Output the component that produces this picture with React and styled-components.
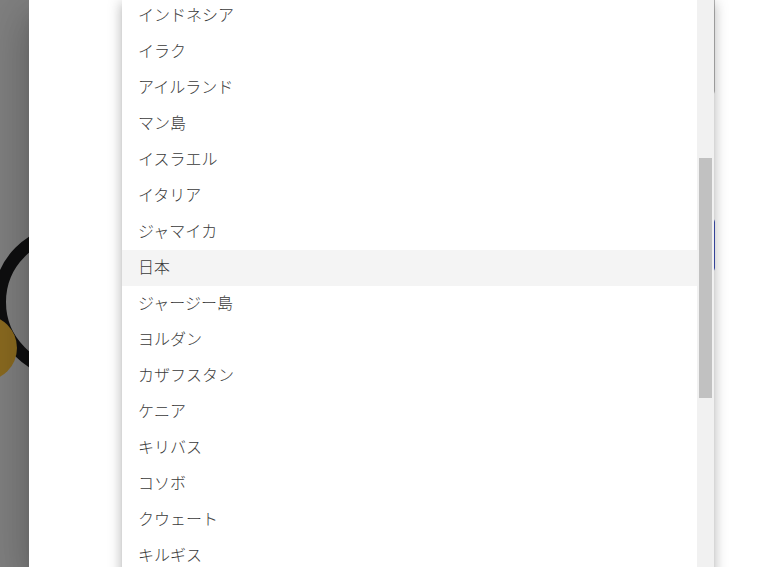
import React from "react";
import styled, { createGlobalStyle } from "styled-components";

const countries = [
  "インドネシア",
  "イラク",
  "アイルランド",
  "マン島",
  "イスラエル",
  "イタリア",
  "ジャマイカ",
  "日本",
  "ジャージー島",
  "ヨルダン",
  "カザフスタン",
  "ケニア",
  "キリバス",
  "コソボ",
  "クウェート",
  "キルギス",
  "ラオス",
  "ラトビア",
];

const GlobalStyle = createGlobalStyle`
  html, body {
    margin: 0;
    padding: 0;
    overflow: hidden;
    background: #ffffff;
  }
  * {
    box-sizing: border-box;
  }
`;

export default function App() {
  return (
    <>
      <GlobalStyle />
      <Screen>
        <Backdrop>
          <svg width="29" height="567" viewBox="0 0 29 567">
            <circle cx="70" cy="302" r="70.5" fill="none" stroke="#0f0f10" strokeWidth="13" />
            <circle cx="-16" cy="348" r="33" fill="#8a6a20" />
          </svg>
        </Backdrop>
        <Modal>
          <Form>
            <Field $top="-40px" $height="135px" />
            <Field $top="123px" $height="54px" $focused />
          </Form>
          <Menu>
            <List>
              {countries.map((name) => (
                <Item key={name} $active={name === "日本"}>
                  {name}
                </Item>
              ))}
            </List>
            <Track>
              <Thumb />
            </Track>
          </Menu>
        </Modal>
      </Screen>
    </>
  );
}

const Screen = styled.div`
  display: flex;
  height: 100vh;
  overflow: hidden;
  font-family: "Noto Sans CJK JP", "Noto Sans", sans-serif;
`;

const Backdrop = styled.div`
  width: 29px;
  flex-shrink: 0;
  background: #808080;
  overflow: hidden;

  svg {
    display: block;
  }
`;

const Modal = styled.div`
  flex: 1;
  position: relative;
  z-index: 1;
  background: #ffffff;
  overflow: hidden;
  box-shadow: 0px 11px 15px -7px rgba(0, 0, 0, 0.2),
    0px 24px 38px 3px rgba(0, 0, 0, 0.14),
    0px 9px 46px 8px rgba(0, 0, 0, 0.12);
`;

const Form = styled.div`
  display: flex;
  flex-direction: column;
  padding-left: 93px;
`;

const Field = styled.div`
  width: 593px;
  height: ${(p) => p.$height};
  margin-top: ${(p) => p.$top};
  border: 1px solid ${(p) => (p.$focused ? "#3f51b5" : "#b8b8b8")};
  border-radius: 4px;
`;

const Menu = styled.div`
  position: absolute;
  top: -2px;
  left: 93px;
  width: 592px;
  display: flex;
  background: #ffffff;
  box-shadow: 0px 5px 5px -3px rgba(0, 0, 0, 0.2),
    0px 8px 10px 1px rgba(0, 0, 0, 0.14),
    0px 3px 14px 2px rgba(0, 0, 0, 0.12);
`;

const List = styled.ul`
  flex: 1;
  margin: 0;
  padding: 0;
  list-style: none;
`;

const Item = styled.li`
  height: 36px;
  padding: 4px 16px 8px;
  font-size: 16px;
  font-weight: 300;
  line-height: 24px;
  color: #3a3a3a;
  background: ${(p) => (p.$active ? "#f4f4f4" : "transparent")};
  white-space: nowrap;
`;

const Track = styled.div`
  width: 17px;
  flex-shrink: 0;
  background: #f1f1f1;
  padding: 160px 2px 0 2px;
`;

const Thumb = styled.div`
  height: 240px;
  background: #c1c1c1;
`;
